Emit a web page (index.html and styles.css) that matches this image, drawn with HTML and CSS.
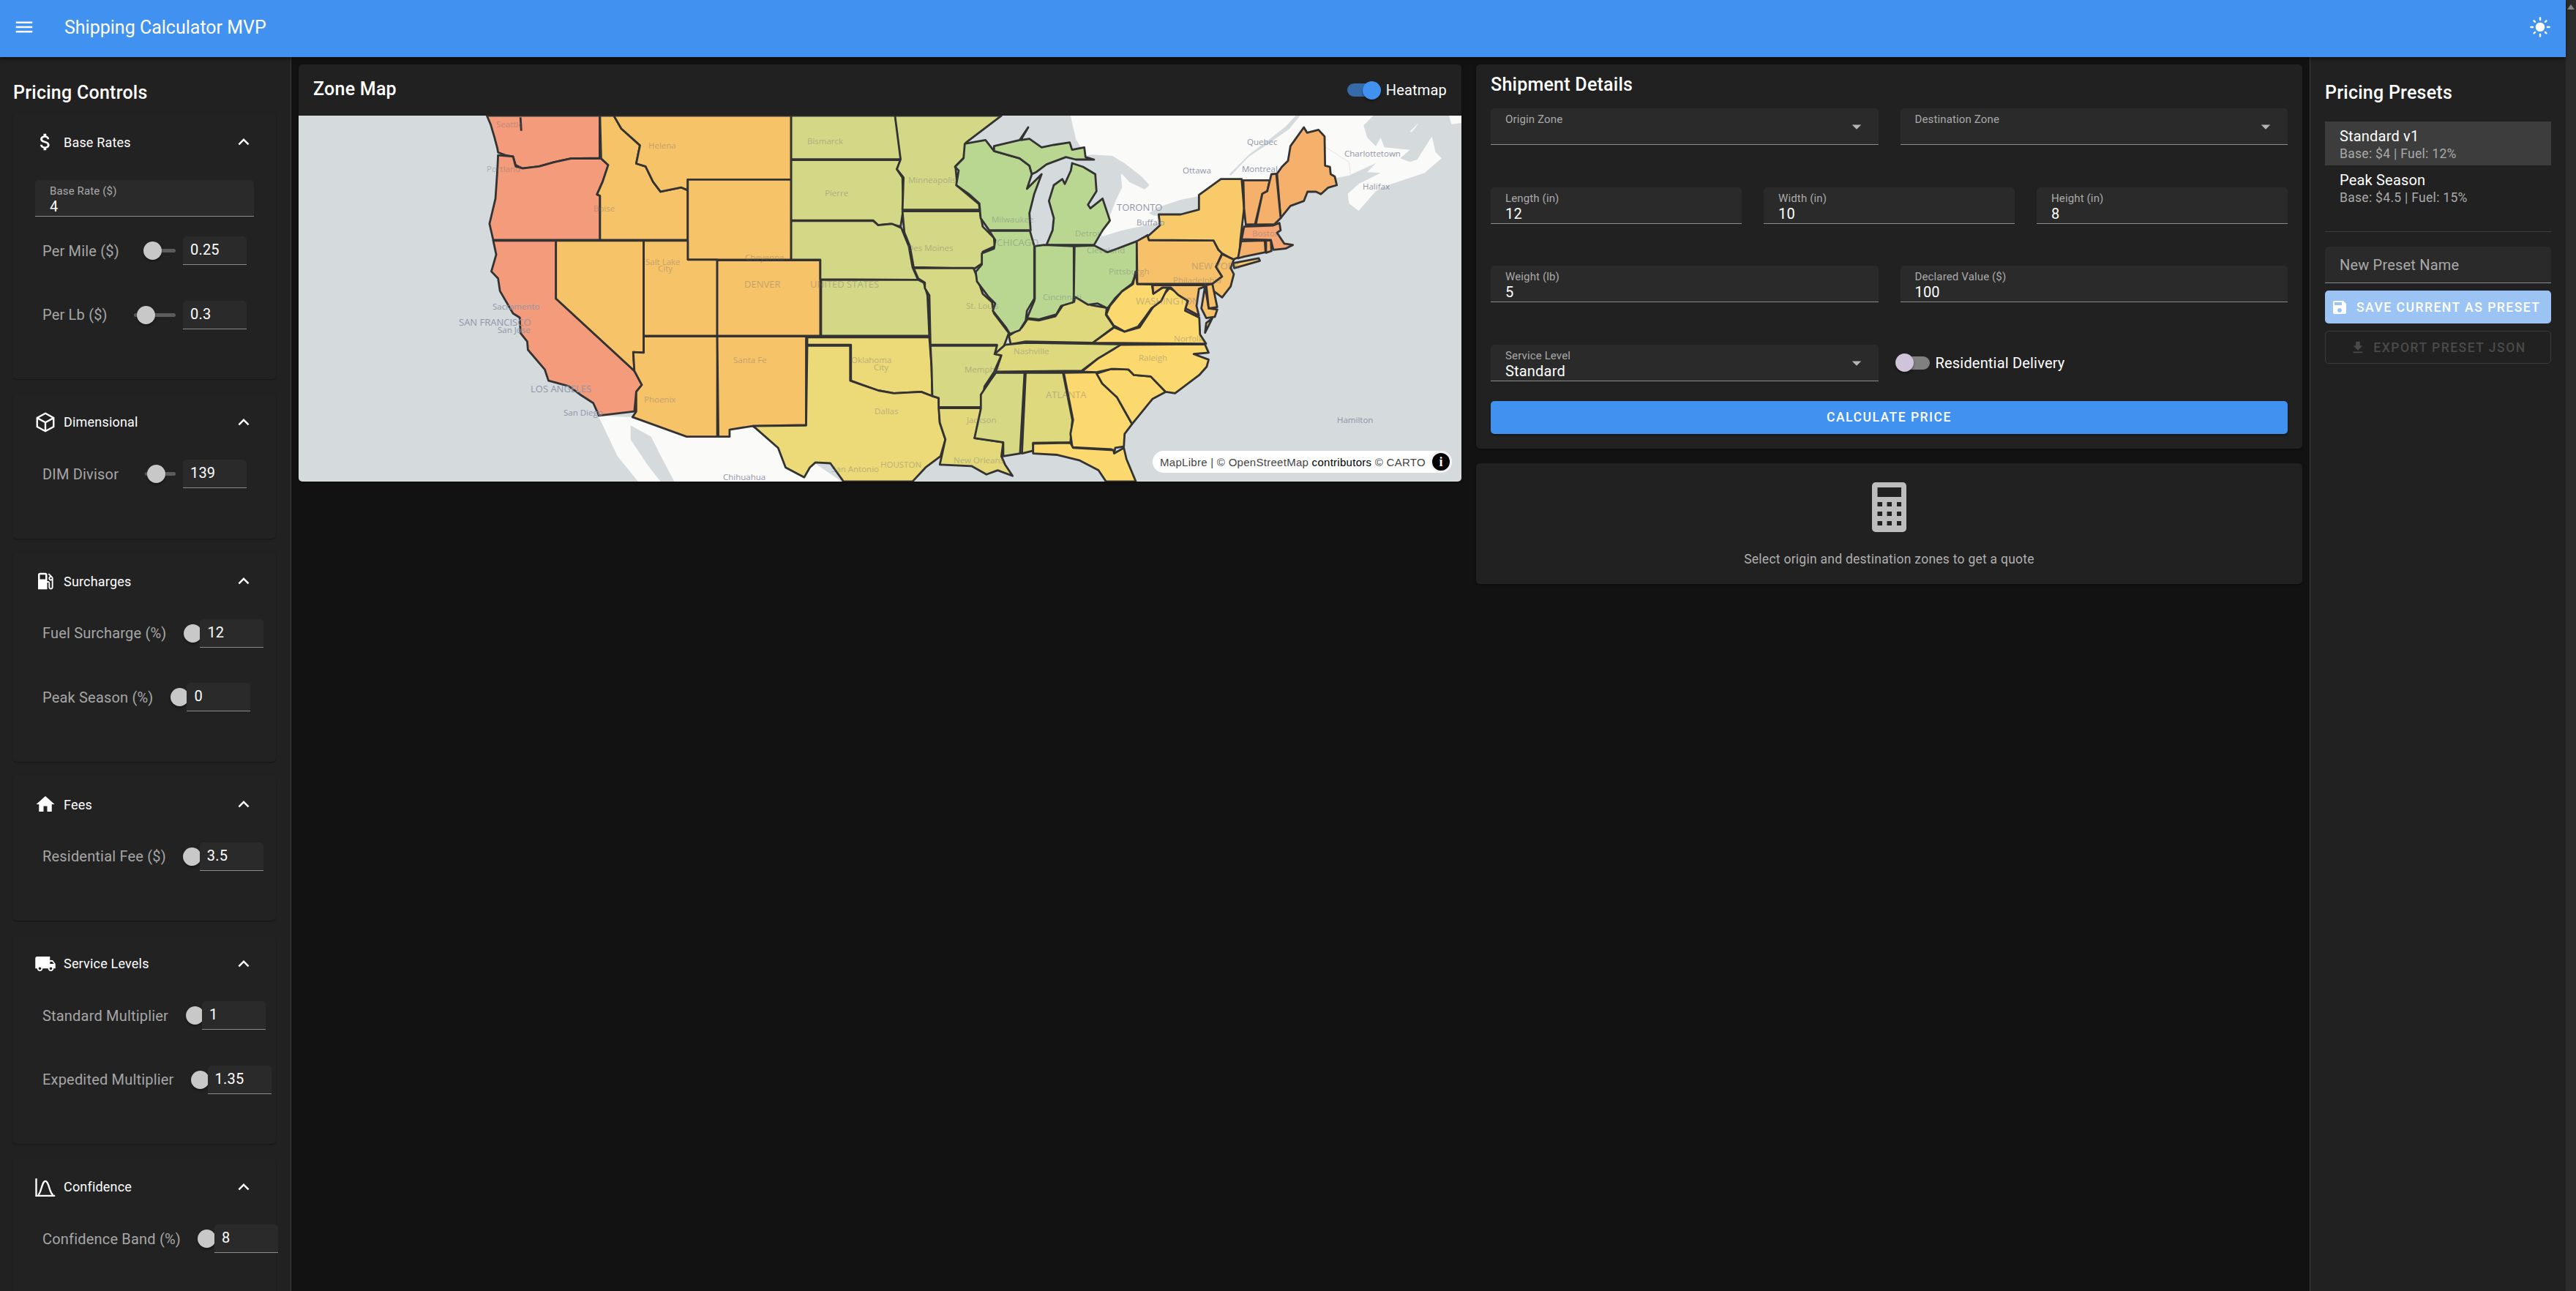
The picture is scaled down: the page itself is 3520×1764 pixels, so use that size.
FILE: index.html
```html
<!DOCTYPE html>
<html lang="en">
<head>
<meta charset="utf-8">
<title>Shipping Calculator MVP</title>
<link rel="stylesheet" href="styles.css">
</head>
<body>
<div class="window">
<div class="page">
  <header class="appbar">
    <svg class="icon" viewBox="0 0 24 24"><path d="M3 18h18v-2H3zm0-5h18v-2H3zm0-7v2h18V6z"/></svg>
    <h1 class="app-title">Shipping Calculator MVP</h1>
    <svg class="icon sun" viewBox="0 0 24 24"><path d="M12 7c-2.76 0-5 2.24-5 5s2.24 5 5 5 5-2.24 5-5-2.24-5-5-5zM2 13h2c.55 0 1-.45 1-1s-.45-1-1-1H2c-.55 0-1 .45-1 1s.45 1 1 1zm18 0h2c.55 0 1-.45 1-1s-.45-1-1-1h-2c-.55 0-1 .45-1 1s.45 1 1 1zM11 2v2c0 .55.45 1 1 1s1-.45 1-1V2c0-.55-.45-1-1-1s-1 .45-1 1zm0 18v2c0 .55.45 1 1 1s1-.45 1-1v-2c0-.55-.45-1-1-1s-1 .45-1 1zM5.99 4.58c-.39-.39-1.03-.39-1.41 0-.39.39-.39 1.03 0 1.41l1.06 1.06c.39.39 1.03.39 1.41 0s.39-1.03 0-1.41L5.99 4.58zm12.37 12.37c-.39-.39-1.03-.39-1.41 0-.39.39-.39 1.03 0 1.41l1.06 1.06c.39.39 1.03.39 1.41 0 .39-.39.39-1.03 0-1.41l-1.06-1.06zm1.06-10.96c.39-.39.39-1.03 0-1.41-.39-.39-1.03-.39-1.41 0l-1.06 1.06c-.39.39-.39 1.03 0 1.41s1.03.39 1.41 0l1.06-1.06zM7.05 18.36c.39-.39.39-1.03 0-1.41-.39-.39-1.03-.39-1.41 0l-1.06 1.06c-.39.39-.39 1.03 0 1.41s1.03.39 1.41 0l1.06-1.06z"/></svg>
  </header>
  <div class="content">
    <aside class="controls">
      <h2 class="side-title">Pricing Controls</h2>

      <section class="acc">
        <div class="acc-head">
          <svg class="icon" viewBox="0 0 24 24"><path d="M11.8 10.9c-2.27-.59-3-1.2-3-2.15 0-1.09 1.01-1.85 2.7-1.85 1.78 0 2.44.85 2.5 2.1h2.21c-.07-1.72-1.12-3.3-3.21-3.81V3h-3v2.16c-1.94.42-3.5 1.68-3.5 3.61 0 2.31 1.91 3.46 4.7 4.13 2.5.6 3 1.48 3 2.41 0 .69-.49 1.79-2.7 1.79-2.06 0-2.87-.92-2.98-2.1h-2.2c.12 2.19 1.76 3.42 3.68 3.83V21h3v-2.15c1.95-.37 3.5-1.5 3.5-3.55 0-2.84-2.43-3.81-4.7-4.4z"/></svg>
          <span class="acc-title">Base Rates</span>
          <svg class="icon chev" viewBox="0 0 24 24"><path d="M12 8l-6 6 1.41 1.41L12 10.83l4.59 4.58L18 14z"/></svg>
        </div>
        <div class="acc-body">
          <div class="field base-field"><span class="f-label">Base Rate ($)</span><span class="f-value">4</span></div>
          <div class="row"><span class="r-label">Per Mile ($)</span><div class="slider"><span class="thumb" style="left:24%"></span></div><div class="mini">0.25</div></div>
          <div class="row"><span class="r-label">Per Lb ($)</span><div class="slider"><span class="thumb" style="left:29%"></span></div><div class="mini">0.3</div></div>
        </div>
      </section>

      <section class="acc">
        <div class="acc-head">
          <svg class="icon outline" viewBox="0 0 24 24"><path d="M12 2.2l9 5v9.6l-9 5-9-5V7.200zM3.500 7.500l8.500 4.700 8.500-4.700M12 12.200v9.300"/></svg>
          <span class="acc-title">Dimensional</span>
          <svg class="icon chev" viewBox="0 0 24 24"><path d="M12 8l-6 6 1.41 1.41L12 10.83l4.59 4.58L18 14z"/></svg>
        </div>
        <div class="acc-body">
          <div class="row"><span class="r-label">DIM Divisor</span><div class="slider"><span class="thumb" style="left:36%"></span></div><div class="mini">139</div></div>
        </div>
      </section>

      <section class="acc">
        <div class="acc-head">
          <svg class="icon" viewBox="0 0 24 24"><path d="M19.77 7.23l.01-.01-3.72-3.72L15 4.56l2.11 2.11c-.94.36-1.61 1.26-1.61 2.33 0 1.38 1.12 2.5 2.5 2.5.36 0 .69-.08 1-.21v7.21c0 .55-.45 1-1 1s-1-.45-1-1V14c0-1.1-.9-2-2-2h-1V5c0-1.1-.9-2-2-2H6c-1.1 0-2 .9-2 2v16h10v-7.5h1.500v5c0 1.38 1.12 2.5 2.5 2.5s2.5-1.12 2.5-2.5V9c0-.69-.28-1.32-.73-1.77zM12 10H6V5h6v5zm6 0c-.55 0-1-.45-1-1s.45-1 1-1 1 .45 1 1-.45 1-1 1z"/></svg>
          <span class="acc-title">Surcharges</span>
          <svg class="icon chev" viewBox="0 0 24 24"><path d="M12 8l-6 6 1.41 1.41L12 10.83l4.59 4.58L18 14z"/></svg>
        </div>
        <div class="acc-body">
          <div class="row"><span class="r-label">Fuel Surcharge (%)</span><div class="slider"><span class="thumb" style="left:0"></span></div><div class="mini">12</div></div>
          <div class="row"><span class="r-label">Peak Season (%)</span><div class="slider"><span class="thumb" style="left:0"></span></div><div class="mini">0</div></div>
        </div>
      </section>

      <section class="acc">
        <div class="acc-head">
          <svg class="icon" viewBox="0 0 24 24"><path d="M10 20v-6h4v6h5v-8h3L12 3 2 12h3v8z"/></svg>
          <span class="acc-title">Fees</span>
          <svg class="icon chev" viewBox="0 0 24 24"><path d="M12 8l-6 6 1.41 1.41L12 10.83l4.59 4.58L18 14z"/></svg>
        </div>
        <div class="acc-body">
          <div class="row"><span class="r-label">Residential Fee ($)</span><div class="slider"><span class="thumb" style="left:0"></span></div><div class="mini">3.5</div></div>
        </div>
      </section>

      <section class="acc">
        <div class="acc-head">
          <svg class="icon" viewBox="0 0 24 24"><path d="M20 8h-3V4H3c-1.100 0-2 .9-2 2v11h2c0 1.660 1.340 3 3 3s3-1.340 3-3h6c0 1.660 1.340 3 3 3s3-1.340 3-3h2v-5l-3-4zM6 18.500c-.83 0-1.500-.67-1.500-1.500s.67-1.500 1.500-1.500 1.500.67 1.500 1.500-.67 1.500-1.500 1.500zm13.500-9l1.960 2.500H17V9.500h2.500zm-1.500 9c-.83 0-1.500-.67-1.500-1.500s.67-1.500 1.500-1.500 1.500.67 1.500 1.500-.67 1.500-1.500 1.500z"/></svg>
          <span class="acc-title">Service Levels</span>
          <svg class="icon chev" viewBox="0 0 24 24"><path d="M12 8l-6 6 1.41 1.41L12 10.83l4.59 4.58L18 14z"/></svg>
        </div>
        <div class="acc-body">
          <div class="row"><span class="r-label">Standard Multiplier</span><div class="slider"><span class="thumb" style="left:0"></span></div><div class="mini">1</div></div>
          <div class="row"><span class="r-label">Expedited Multiplier</span><div class="slider"><span class="thumb" style="left:0"></span></div><div class="mini">1.35</div></div>
        </div>
      </section>

      <section class="acc">
        <div class="acc-head">
          <svg class="icon outline" viewBox="0 0 24 24"><path d="M2 2.500V21.500h20.500M4 20.500c3.500-1 4-15 8-15s4.500 14 8.500 15"/></svg>
          <span class="acc-title">Confidence</span>
          <svg class="icon chev" viewBox="0 0 24 24"><path d="M12 8l-6 6 1.41 1.41L12 10.83l4.59 4.58L18 14z"/></svg>
        </div>
        <div class="acc-body">
          <div class="row"><span class="r-label">Confidence Band (%)</span><div class="slider"><span class="thumb" style="left:0"></span></div><div class="mini">8</div></div>
        </div>
      </section>
    </aside>

    <main class="main">
      <section class="card map-card">
        <div class="map-head">
          <h2 class="card-title map-title">Zone Map</h2>
          <div class="toggle">
            <span class="switch on"><span class="knob"></span></span>
            <span class="toggle-label">Heatmap</span>
          </div>
        </div>
        <div class="map">
          <svg class="map-svg" viewBox="408 158 1589 500" xmlns="http://www.w3.org/2000/svg">
            <g transform="translate(1200 80) scale(.5102 .3827)">
              <polygon class="land" points="515,204 1150,204 1150,450 1100,520 900,640 690,660 590,690 500,670 560,350 530,290"/>
            </g>
            <g transform="translate(1700 158) scale(.3333)">
              <polygon class="land" points="100,0 530,0 490,40 505,90 540,125 560,90 575,130 680,140 640,175 680,190 710,180 770,85 785,150 810,175 740,235 590,285 540,310 470,390 430,360 425,320 470,280 560,235 505,232 540,195 430,245 380,255 300,300 100,300"/>
              <polygon class="land" points="840,0 891,0 891,30 850,35"/>
              <polygon class="land" points="680,65 715,30 702,50 686,68"/>
              <polyline class="prov-line" points="335,130 430,190 436,240"/>
            </g>
            <g transform="translate(400 80) scale(.5102 .3827)">
              <polygon class="land" points="818,1275 1240,1300 1470,1510 925,1510 870,1420 845,1350"/>
              <polygon class="water" points="905,1310 960,1350 990,1430 1022,1510 985,1510 950,1450 905,1360"/>
            </g>
            <g transform="translate(1500 158) scale(.3333)">
              <polygon class="water" points="-100,170 -20,160 60,165 110,195 180,250 212,285 192,302 130,272 98,238 95,245 100,295 75,345 50,410 50,440 20,470 -100,400"/>
              <polygon class="water" points="-30,515 20,495 100,470 170,455 250,440 250,470 160,515 60,560 -30,540"/>
              <polygon class="water" points="210,400 250,375 340,345 415,330 425,385 350,410 260,410 230,410"/>
              <polygon class="water" points="540,240 620,160 700,100 770,45 812,0 830,0 785,55 700,115 620,168 545,246"/>
            </g>

            <g class="states" transform="translate(400 80) scale(.5102 .3827)">
              <polygon class="st z-red" points="520,204 822,204 822,355 745,357 700,370 660,385 615,392 597,380 590,350 570,345 550,335 548,320 540,280 530,235"/>
              <polyline class="st-line" points="610,210 612,258"/>
              <polygon class="st z-red" points="550,345 590,350 597,385 615,392 660,385 700,370 745,357 826,357 845,380 830,440 815,485 823,490 823,648 537,648 527,590 543,500 548,400"/>
              <polygon class="st z-red" points="537,650 705,650 705,857 915,1115 935,1165 920,1190 915,1260 820,1275 805,1230 770,1200 740,1170 685,1150 675,1110 630,1040 628,1010 610,980 608,925 590,910 555,830 550,785 532,760 545,700"/>
              <polygon class="st z-amber" points="705,650 940,650 940,1050 912,1048 915,1115 705,857"/>
              <polygon class="st z-amber" points="823,204 860,204 880,250 930,310 920,375 945,385 965,440 985,475 1040,460 1058,470 1058,648 823,648 823,490 815,485 830,440 845,380 826,357"/>
              <polygon class="st z-amber" points="860,204 1335,204 1335,432 1058,432 1058,470 1040,460 985,475 965,440 945,385 920,375 930,310 880,250"/>
              <polygon class="st z-amber" points="1058,432 1335,432 1335,718 1058,718"/>
              <polygon class="st z-amber" points="940,650 1058,650 1058,718 1137,718 1137,990 940,990"/>
              <polygon class="st z-amber" points="1137,720 1413,720 1413,990 1137,990"/>
              <polygon class="st z-amber" points="940,992 1137,992 1137,1350 1055,1350 910,1280 920,1260 920,1190 935,1165 915,1115 912,1048 940,1050"/>
              <polygon class="st z-amber" points="1137,992 1375,992 1375,1308 1232,1312 1170,1325 1170,1350 1140,1350"/>
              <polygon class="st z-olive" points="1335,204 1613,204 1625,290 1630,360 1335,360"/>
              <polygon class="st z-olive" points="1335,362 1628,362 1618,395 1633,425 1635,540 1628,600 1600,590 1568,595 1555,578 1335,578"/>
              <polygon class="st z-olive" points="1335,580 1555,580 1568,595 1605,590 1630,605 1650,670 1660,745 1675,790 1413,788 1413,718 1335,718"/>
              <polygon class="st z-olive" points="1415,790 1675,790 1690,800 1700,845 1705,990 1415,990"/>
              <polygon class="st z-sand" points="1378,995 1705,995 1711,1100 1713,1205 1683,1190 1610,1195 1568,1185 1525,1165 1495,1150 1495,1022 1378,1022"/>
              <polygon class="st z-sand" points="1378,1025 1493,1025 1493,1150 1525,1165 1568,1185 1610,1195 1683,1190 1713,1205 1730,1212 1733,1300 1748,1360 1735,1420 1695,1460 1660,1510 1475,1510 1440,1445 1400,1442 1385,1460 1370,1495 1320,1460 1300,1390 1240,1320 1232,1312 1375,1310"/>
            </g>

            <g class="states" transform="translate(1200 80) scale(.5102 .3827)">
              <polygon class="st z-olive" points="45,204 330,204 235,300 232,350 207,385 212,455 270,520 272,540 65,540 68,425 50,395 60,360"/>
              <polygon class="st z-olive" points="65,545 272,545 280,600 310,640 312,670 280,690 280,730 258,750 95,745 85,670 70,620"/>
              <polygon class="st z-olive2" points="95,748 255,748 262,770 280,840 305,870 310,910 350,980 330,1050 312,1055 318,1022 140,1022 137,845 125,820 125,800 107,785"/>
              <polygon class="st z-olive2" points="140,1025 318,1025 312,1055 330,1060 310,1120 285,1170 275,1245 162,1245 162,1212 145,1205 143,1100"/>
              <polygon class="st z-sand2" points="162,1248 275,1248 275,1320 258,1355 335,1370 330,1420 340,1450 360,1490 320,1470 290,1485 250,1455 165,1450 180,1360 165,1300"/>
              <polygon class="st z-sand3" points="355,1020 395,1010 575,1015 632,958 610,915 612,890 570,880 527,850 525,868 495,880 475,920 430,935 400,930 385,960 350,990"/>
              <polygon class="st z-sand3" points="340,1022 395,1015 650,1020 640,1040 590,1070 545,1115 315,1118 330,1060 312,1055"/>
              <polygon class="st z-olive2" points="315,1122 392,1122 380,1410 335,1420 335,1370 258,1355 275,1250 275,1200 300,1150"/>
              <polygon class="st z-sand3" points="395,1122 495,1122 520,1290 515,1370 415,1372 415,1400 385,1410"/>
              <polygon class="st z-gold" points="497,1122 585,1120 600,1160 640,1210 665,1270 680,1305 660,1340 658,1385 635,1390 632,1410 625,1395 520,1388 515,1340 522,1290"/>
              <polygon class="st z-gold" points="415,1375 515,1372 522,1390 630,1398 632,1410 658,1390 665,1430 690,1510 610,1510 590,1470 540,1435 480,1415 415,1410"/>
              <polygon class="st z-gold" points="585,1125 625,1108 670,1110 685,1130 730,1135 770,1190 735,1215 680,1305 640,1210 600,1160"/>
              <polygon class="st z-gold" points="545,1118 590,1070 650,1022 875,1020 885,1050 845,1055 885,1075 880,1100 860,1130 795,1195 770,1190 730,1135 685,1130 670,1110 625,1108 585,1120"/>
              <polygon class="st z-gold" points="575,1015 632,960 660,975 700,960 740,880 780,820 810,840 830,860 822,900 860,925 862,985 878,1018"/>
            </g>

            <g class="states" transform="translate(1700 158) scale(.3333)">
              <polygon class="st z-orange" points="135,238 155,210 180,185 190,125 245,48 258,70 305,58 330,85 332,205 352,210 355,240 372,250 380,285 345,295 315,322 295,312 260,312 245,350 190,370 150,420"/>
            </g>

            <g class="states" transform="translate(1260 158) scale(.3333)">
              <polygon class="st z-green" points="175,115 260,100 295,145 400,175 440,205 450,240 430,300 490,240 460,320 440,400 445,470 275,470 240,420 235,360 190,320 140,285 150,225 135,210 170,175"/>
              <polygon class="st z-green" points="295,125 400,100 435,48 405,100 440,95 490,130 540,120 605,110 615,140 665,130 670,170 705,180 630,180 590,170 510,200 470,230 450,240 440,205 400,175 295,145"/>
              <polygon class="st z-green" points="615,195 660,210 710,240 715,310 680,365 690,380 740,340 770,430 740,470 705,530 510,530 535,470 540,420 520,350 540,285 575,260 585,280 610,225"/>
              <polygon class="st z-green" points="275,472 442,472 460,535 460,750 430,800 425,840 400,880 360,895 345,870 290,800 300,770 270,740 225,680 220,640 245,610 245,565 295,545 300,510"/>
              <polygon class="st z-green" points="462,535 500,530 622,535 622,740 620,765 570,780 550,815 480,835 430,830 460,760 462,750"/>
              <polygon class="st z-green" points="625,535 705,532 760,560 880,515 880,640 860,690 820,720 790,750 760,790 720,770 680,775 630,745 622,742"/>
            </g>

            <g class="states" transform="translate(1500 158) scale(.3333)">
              <polygon class="st z-gold" points="162,690 222,692 228,730 265,705 290,700 260,760 220,790 195,825 165,865 110,885 65,860 35,815 50,780 100,720 145,690 155,640"/>
              <polygon class="st z-pa" points="160,515 205,490 210,510 475,512 495,550 510,565 485,620 510,660 470,690 162,690"/>
              <polygon class="st z-ny" points="210,510 205,495 255,450 250,405 340,405 415,385 415,325 505,260 590,260 600,380 585,510 580,580 555,590 510,565 495,550 475,512"/>
              <polygon class="st z-ny" points="555,605 660,585 665,595 560,625"/>
              <polygon class="st z-pa" points="510,568 558,590 545,625 558,650 545,700 510,745 470,715 470,690 510,660 485,620"/>
              <polygon class="st z-pa" points="225,695 455,695 415,710 405,780 415,820 360,790 370,760 330,735 300,705 265,705 228,730"/>
              <polygon class="st z-pa" points="440,700 455,790 490,795 480,825 445,830 425,790"/>
              <polygon class="st z-pa" points="445,695 470,690 490,785 455,790"/>
              <polygon class="st z-gold" points="470,830 440,890 445,850"/>
              <polygon class="st z-orange" points="597,265 705,265 695,310 675,320 645,445 607,447 600,380"/>
              <polygon class="st z-orange" points="712,240 732,238 750,420 725,445 648,447 675,320 695,310"/>
              <polygon class="st z-orange2" points="600,455 720,450 745,440 750,470 735,480 765,525 800,530 770,545 720,550 710,510 590,507"/>
              <polygon class="st z-orange" points="588,515 685,512 688,560 600,578 575,585"/>
              <polygon class="st z-orange" points="690,512 710,512 712,555 690,562"/>
            </g>

            <g class="labels">
              <text class="pl" x="678" y="174">Seattle</text>
              <text class="pl" x="665" y="235">Portland</text>
              <text class="pl" x="811" y="289">Boise</text>
              <text class="pl" x="886" y="203">Helena</text>
              <text class="pl" x="1103" y="197">Bismarck</text>
              <text class="pl" x="1127" y="268">Pierre</text>
              <text class="pl" x="882" y="362">Salt Lake</text>
              <text class="pl" x="899" y="371">City</text>
              <text class="pl" x="1018" y="356">Cheyenne</text>
              <text class="pl caps" x="1017" y="393">DENVER</text>
              <text class="pl caps" x="1107" y="393">UNITED STATES</text>
              <text class="pl sea" x="673" y="423">Sacramento</text>
              <text class="pl sea caps" x="627" y="445">SAN FRANCISCO</text>
              <text class="pl sea" x="680" y="455">San Jose</text>
              <text class="pl sea caps" x="725" y="536">LOS ANGELES</text>
              <text class="pl sea" x="770" y="568">San Diego</text>
              <text class="pl" x="880" y="550">Phoenix</text>
              <text class="pl" x="1002" y="496">Santa Fe</text>
              <text class="pl" x="1163" y="496">Oklahoma</text>
              <text class="pl" x="1194" y="506">City</text>
              <text class="pl" x="1136" y="645">San Antonio</text>
              <text class="pl sea" x="988" y="656">Chihuahua</text>
              <text class="pl" x="1195" y="566">Dallas</text>
              <text class="pl" x="1203" y="639">HOUSTON</text>
              <text class="pl" x="1241" y="250">Minneapolis</text>
              <text class="pl" x="1240" y="343">Des Moines</text>
              <text class="pl" x="1320" y="422">St. Louis</text>
              <text class="pl" x="1318" y="509">Memphis</text>
              <text class="pl" x="1321" y="578">Jackson</text>
              <text class="pl" x="1303" y="633">New Orleans</text>
              <text class="pl" x="1385" y="484">Nashville</text>
              <text class="pl caps" x="1429" y="544">ATLANTA</text>
              <text class="pl" x="1355" y="304">Milwaukee</text>
              <text class="pl caps" x="1362" y="336">CHICAGO</text>
              <text class="pl" x="1469" y="323">Detroit</text>
              <text class="pl" x="1485" y="346">Cleveland</text>
              <text class="pl" x="1425" y="410">Cincinnati</text>
              <text class="pl" x="1515" y="375">Pittsburgh</text>
              <text class="pl sea caps" x="1526" y="288">TORONTO</text>
              <text class="pl sea" x="1553" y="308">Buffalo</text>
              <text class="pl sea" x="1616" y="237">Ottawa</text>
              <text class="pl sea" x="1697" y="235">Montreal</text>
              <text class="pl sea" x="1704" y="198">Quebec</text>
              <text class="pl sea" x="1837" y="214">Charlottetown</text>
              <text class="pl sea" x="1862" y="259">Halifax</text>
              <text class="pl caps" x="1628" y="368">NEW YORK</text>
              <text class="pl" x="1603" y="387">Philadelphia</text>
              <text class="pl caps" x="1552" y="416">WASHINGTON</text>
              <text class="pl" x="1604" y="467">Norfolk</text>
              <text class="pl" x="1556" y="493">Raleigh</text>
              <text class="pl" x="1711" y="323">Boston</text>
              <text class="pl sea" x="1827" y="578">Hamilton</text>
            </g>
          </svg>
          <div class="attrib">
            <span class="attrib-text"><span class="attrib-soft">MapLibre | © OpenStreetMap</span> contributors <span class="attrib-soft">© CARTO</span></span>
            <span class="info">i</span>
          </div>
        </div>
      </section>

      <div class="ship-col">
        <section class="card ship">
          <h2 class="card-title ship-title">Shipment Details</h2>
          <div class="form">
            <div class="form-row">
              <div class="field"><span class="f-label">Origin Zone</span><svg class="drop" viewBox="0 0 24 24"><path d="M7 10l5 5 5-5z"/></svg></div>
              <div class="field"><span class="f-label">Destination Zone</span><svg class="drop" viewBox="0 0 24 24"><path d="M7 10l5 5 5-5z"/></svg></div>
            </div>
            <div class="form-row">
              <div class="field"><span class="f-label">Length (in)</span><span class="f-value">12</span></div>
              <div class="field"><span class="f-label">Width (in)</span><span class="f-value">10</span></div>
              <div class="field"><span class="f-label">Height (in)</span><span class="f-value">8</span></div>
            </div>
            <div class="form-row">
              <div class="field"><span class="f-label">Weight (lb)</span><span class="f-value">5</span></div>
              <div class="field"><span class="f-label">Declared Value ($)</span><span class="f-value">100</span></div>
            </div>
            <div class="form-row">
              <div class="field"><span class="f-label">Service Level</span><span class="f-value">Standard</span><svg class="drop" viewBox="0 0 24 24"><path d="M7 10l5 5 5-5z"/></svg></div>
              <div class="toggle res-toggle">
                <span class="switch off"><span class="knob"></span></span>
                <span class="toggle-label">Residential Delivery</span>
              </div>
            </div>
          </div>
          <button class="btn primary calc">Calculate Price</button>
        </section>

        <section class="card quote">
          <svg class="calc-icon" viewBox="0 0 47 68">
            <path class="calc-body" d="M5 0h37a5 5 0 0 1 5 5v58a5 5 0 0 1-5 5H5a5 5 0 0 1-5-5V5a5 5 0 0 1 5-5zM7.500 7v13H40V7zM7.500 27v6H14v-6zm13 0v6H27v-6zm13.500 0v6H40v-6zM7.500 40v6H14v-6zm13 0v6H27v-6zm13.500 0v6H40v-6zM7.500 53v6H14v-6zm13 0v6H27v-6zm13.500 0v6H40v-6z"/>
          </svg>
          <p class="quote-text">Select origin and destination zones to get a quote</p>
        </section>
      </div>
    </main>

    <aside class="presets">
      <h2 class="side-title">Pricing Presets</h2>
      <ul class="preset-list">
        <li class="preset selected"><span class="p-name">Standard v1</span><span class="p-sub">Base: $4 | Fuel: 12%</span></li>
        <li class="preset"><span class="p-name">Peak Season</span><span class="p-sub">Base: $4.5 | Fuel: 15%</span></li>
      </ul>
      <hr class="divider">
      <div class="field name-field"><span class="placeholder">New Preset Name</span></div>
      <button class="btn save">
        <svg class="btn-icon" viewBox="0 0 24 24"><path d="M17 3H5c-1.110 0-2 .9-2 2v14c0 1.100.89 2 2 2h14c1.100 0 2-.9 2-2V7l-4-4zm-5 16c-1.660 0-3-1.340-3-3s1.340-3 3-3 3 1.340 3 3-1.340 3-3 3zm3-10H5V5h10v4z"/></svg>
        Save Current as Preset
      </button>
      <button class="btn export">
        <svg class="btn-icon" viewBox="0 0 24 24"><path d="M19 9h-4V3H9v6H5l7 7 7-7zM5 18v2h14v-2H5z"/></svg>
        Export Preset JSON
      </button>
    </aside>
  </div>
</div>
<div class="scrollbar"><span class="scroll-up"></span></div>
</div>
</body>
</html>
```

FILE: styles.css
```css
* { box-sizing: border-box; }
html, body { margin: 0; height: 100%; overflow: hidden; }
body { background: #121212; color: #fff; font-family: Roboto, "Liberation Sans", sans-serif; }
h1, h2, p, ul { margin: 0; padding: 0; }

.window { display: flex; height: 100vh; }
.page { flex: 1; min-width: 0; display: flex; flex-direction: column; }
.scrollbar { width: 14px; background: #2c2c2c; display: flex; justify-content: center; padding-top: 6px; align-items: flex-start; }
.scroll-up { border-left: 5px solid transparent; border-right: 5px solid transparent; border-bottom: 7px solid #858585; }

.icon { width: 30px; height: 30px; fill: #fff; flex-shrink: 0; }
.icon.outline { fill: none; stroke: #fff; stroke-width: 1.900; }

.appbar { height: 78px; flex-shrink: 0; background: #4091f0; display: flex; align-items: center; padding: 0 20px 4px 18px; box-shadow: 0 2px 5px rgba(0,0,0,.5); position: relative; z-index: 2; }
.app-title { font-size: 25px; font-weight: 400; margin-left: 40px; flex: 1; }

.content { flex: 1; min-height: 0; display: flex; }

.controls { width: 398px; flex-shrink: 0; background: #212121; border-right: 1px solid #3d3d3d; padding: 0 20px 0 18px; overflow: hidden; }
.side-title { font-size: 25px; font-weight: 500; line-height: 32px; letter-spacing: .25px; padding-top: 33px; margin-bottom: 12px; }
.acc { background: #222; border-radius: 5px; margin-bottom: 19.500px; box-shadow: 0 1px 2px rgba(0,0,0,.35); }
.acc-head { height: 78px; display: flex; align-items: center; padding: 0 29px; gap: 10px; }
.acc-title { flex: 1; font-size: 18px; font-weight: 400; letter-spacing: .19px; }
.acc-body { padding: 12.500px 30px 20px; }

.field { position: relative; min-width: 0; height: 50px; background: #2a2a2a; border-bottom: 1.500px solid #8c8c8c; border-radius: 5px 5px 0 0; padding: 5px 20px 0; display: flex; flex-direction: column; }
.f-label { font-size: 15px; line-height: 20px; color: #a9a9a9; letter-spacing: .14px; }
.f-value { font-size: 20px; line-height: 23px; color: #fff; letter-spacing: .19px; }
.base-field { margin-bottom: 27.500px; }
.drop { position: absolute; right: 15px; top: 10px; width: 30px; height: 30px; fill: #b5b5b5; }

.row { display: flex; align-items: center; padding: 0 10px; height: 39px; margin-bottom: 48.500px; }
.r-label { flex-shrink: 0; white-space: nowrap; font-size: 20px; letter-spacing: .19px; color: #a6a6a6; }
.slider { position: relative; flex: 1; min-width: 0; margin: 0 10px 0 36px; height: 5px; border-radius: 3px; background: #5c5c5c; }
.thumb { position: absolute; top: 50%; width: 25px; height: 25px; margin: -12.500px 0 0 -12.500px; border-radius: 50%; background: #c8c8c8; box-shadow: 0 2px 3px rgba(0,0,0,.4); }
.mini { flex-shrink: 0; width: 87px; height: 39px; background: #2a2a2a; border-bottom: 1.500px solid #8c8c8c; border-radius: 5px 5px 0 0; padding: 0 10px; font-size: 20px; letter-spacing: .19px; line-height: 37px; position: relative; }

.main { flex: 1; min-width: 0; display: grid; grid-template-columns: minmax(0, 1589fr) minmax(0, 1129fr); gap: 20px; padding: 10px; align-items: start; }
.card { background: #212121; border-radius: 5px; box-shadow: 0 1px 3px rgba(0,0,0,.4); }
.map-card { overflow: hidden; }
.map-head { height: 70px; display: flex; align-items: center; justify-content: space-between; padding: 0 20px; }
.card-title { font-size: 25px; font-weight: 500; letter-spacing: .25px; }
.map-title { padding-bottom: 4px; }
.toggle { display: flex; align-items: center; }
.toggle-label { font-size: 20px; letter-spacing: .19px; }
.switch { position: relative; display: block; width: 42px; height: 18px; border-radius: 9px; margin-right: 11px; }
.switch.on { background: #366ba9; }
.switch.off { background: #808080; width: 41px; margin-right: 8px; }
.knob { position: absolute; top: -3.500px; width: 25px; height: 25px; border-radius: 50%; box-shadow: 0 2px 3px rgba(0,0,0,.4); }
.on .knob { right: -4px; background: #4091f0; }
.off .knob { left: -6px; background: #cfc4da; }

.map { position: relative; height: 500px; background: #d5dadc; }
.map-svg { display: block; width: 100%; height: 100%; }
.land { fill: #fafaf8; }
.water { fill: #d5dadc; }
.prov-line { fill: none; stroke: #ece4e2; stroke-width: 1px; vector-effect: non-scaling-stroke; }
.st { stroke: #333; stroke-width: 2.800px; stroke-linejoin: round; vector-effect: non-scaling-stroke; }
.st-line { fill: none; stroke: #333; stroke-width: 2.800px; vector-effect: non-scaling-stroke; }
.z-red { fill: #f39b7a; }
.z-amber { fill: #f7c368; }
.z-olive { fill: #d3d886; }
.z-olive2 { fill: #d7d883; }
.z-sand { fill: #ecd977; }
.z-sand2 { fill: #e3d97b; }
.z-sand3 { fill: #dfd97e; }
.z-green { fill: #bad792; }
.z-gold { fill: #fbd96f; }
.z-pa { fill: #f7c169; }
.z-ny { fill: #f8ca6a; }
.z-orange { fill: #f5b06b; }
.z-orange2 { fill: #f4a674; }
.pl { font-family: "Open Sans", sans-serif; font-size: 11.500px; font-weight: 500; fill: #6a6f78; opacity: .38; }
.pl.caps { font-size: 13px; }
.pl.sea { fill: #8f96aa; opacity: 1; }

.attrib { position: absolute; left: 1167px; top: 458px; width: 409px; height: 30px; border-radius: 15px; background: #fff; display: flex; align-items: center; padding-left: 10px; }
.attrib-text { font-family: "Liberation Sans", Arial, sans-serif; font-size: 15px; letter-spacing: .28px; color: #000; white-space: nowrap; flex: 1; }
.attrib-soft { color: #444; }
.info { width: 24px; height: 24px; border-radius: 50%; background: #000; color: #fff; margin-right: 3px; font: 700 18px/24px "Liberation Serif", serif; text-align: center; box-shadow: 0 0 0 3px #f2f2f2; }

.ship-col { display: flex; flex-direction: column; gap: 20px; }
.ship { padding: 12px 20px 20px; }
.ship-title { line-height: 32px; margin-bottom: 16px; }
.form { display: flex; flex-direction: column; gap: 57.670px; margin-bottom: 27px; }
.form-row { display: grid; grid-auto-flow: column; grid-auto-columns: minmax(0, 1fr); gap: 30px; }
.res-toggle { min-width: 0; }
.res-toggle .switch { margin-left: -1px; }

.btn { display: flex; align-items: center; justify-content: center; width: 100%; height: 45px; border: 0; border-radius: 5px; font-family: inherit; font-size: 17.500px; font-weight: 500; letter-spacing: 1.500px; text-transform: uppercase; padding: 0; }
.primary { background: #4091f0; color: #fff; box-shadow: 0 2px 3px rgba(0,0,0,.4); }

.quote { height: 165px; padding-top: 26px; display: flex; flex-direction: column; align-items: center; }
.calc-icon { width: 47px; height: 68px; }
.calc-body { fill: #bdbdbd; fill-rule: evenodd; }
.quote-text { margin-top: 27px; font-size: 17.500px; letter-spacing: .26px; color: #b0b0b0; }

.presets { width: 350px; flex-shrink: 0; background: #212121; border-left: 1px solid #3d3d3d; padding: 0 20px; overflow: hidden; }
.presets .side-title { margin-bottom: 23px; }
.preset-list { list-style: none; }
.preset { height: 60px; padding: 9px 20px 0; display: flex; flex-direction: column; }
.preset.selected { background: #3d3d3d; }
.p-name { font-size: 20px; line-height: 23px; letter-spacing: .19px; }
.p-sub { font-size: 17.500px; line-height: 24px; letter-spacing: .3px; color: #aaa; }
.divider { border: 0; border-top: 1px solid #3d3d3d; margin: 30px 0 20px; }
.name-field { padding-top: 0; justify-content: center; margin-bottom: 10px; }
.placeholder { font-size: 20px; letter-spacing: .19px; color: #a9a9a9; }
.save { background: #9bc4f5; color: #fff; margin-bottom: 10px; justify-content: flex-start; padding-left: 8px; }
.export { background: transparent; color: #4a4a4a; border: 1.500px solid #3c3c3c; }
.btn-icon { width: 22px; height: 22px; fill: currentColor; margin-right: 10px; flex-shrink: 0; }
.save .btn-icon { width: 24px; height: 24px; margin-right: 11px; }
```
